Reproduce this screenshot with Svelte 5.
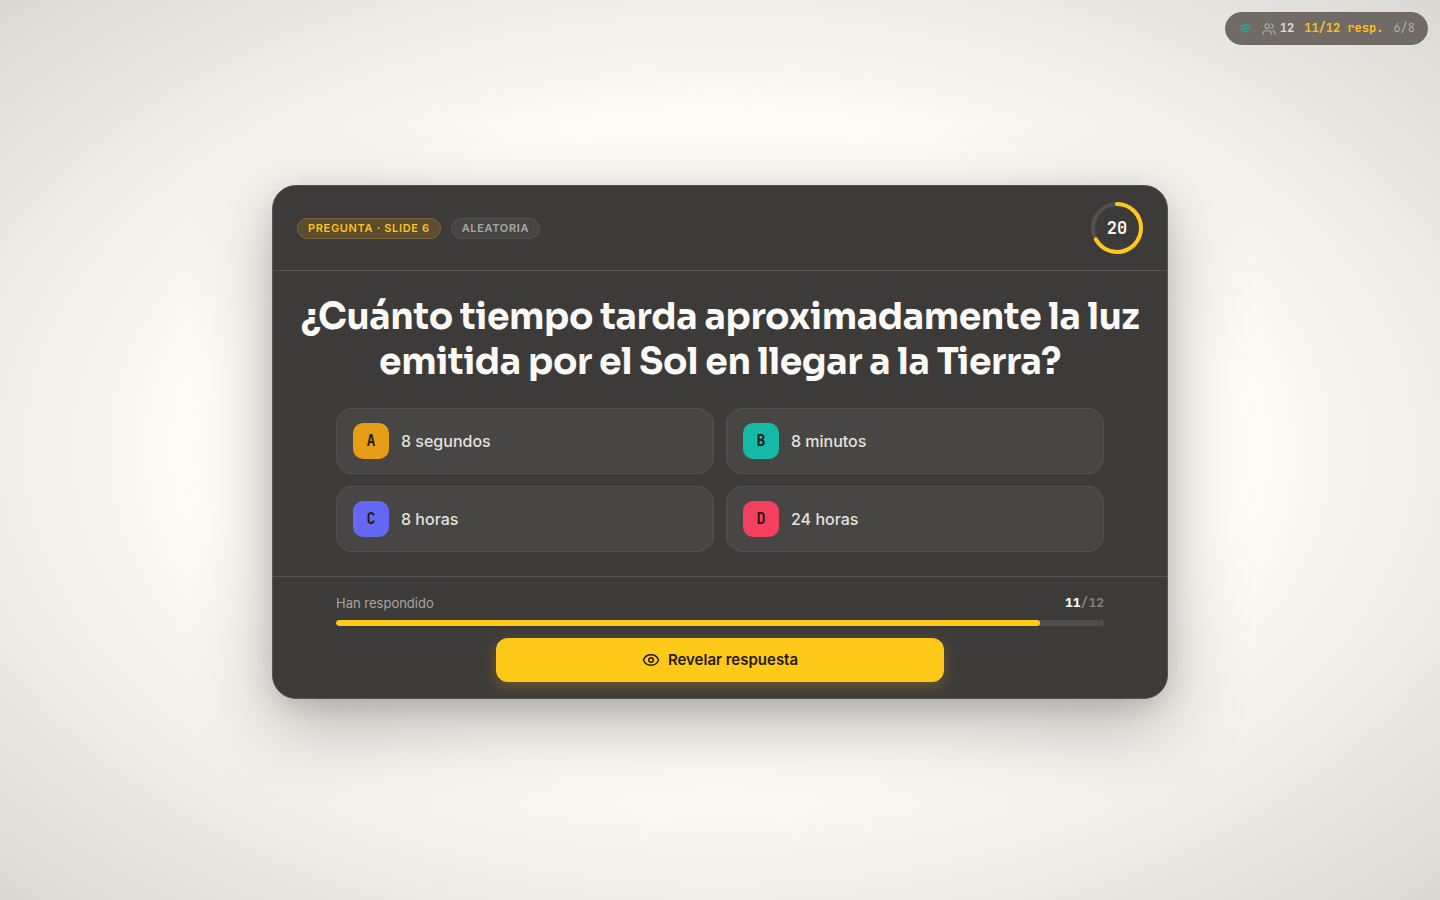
<script>
    const question='¿Cuánto tiempo tarda aproximadamente la luz emitida por el Sol en llegar a la Tierra?'
    const options=[
        {key:'A',text:'8 segundos',color:'#e69e16'},
        {key:'B',text:'8 minutos',color:'#16b8a6'},
        {key:'C',text:'8 horas',color:'#6467f2'},
        {key:'D',text:'24 horas',color:'#f43f5e'}
    ]
    const slide=6
    const slides=8
    const players=12
    const seconds=20
    const limit=30
    const r=24
    const circ=2*Math.PI*r

    let answered=11
    let revealed=false

    $: percent=answered/players*100
    $: offset=circ*(1-seconds/limit)
</script>

<div class="stage">
    <div class="status">
        <svg class="wifi" width="14" height="14" viewBox="0 0 24 24" aria-label="Conectado">
            <path d="M12 20h.01"/>
            <path d="M2 8.82a15 15 0 0 1 20 0"/>
            <path d="M5 12.859a10 10 0 0 1 14 0"/>
            <path d="M8.5 16.429a5 5 0 0 1 7 0"/>
        </svg>
        <span class="players">
            <svg width="14" height="14" viewBox="0 0 24 24" aria-hidden="true">
                <path d="M16 21v-2a4 4 0 0 0-4-4H6a4 4 0 0 0-4 4v2"/>
                <circle cx="9" cy="7" r="4"/>
                <path d="M22 21v-2a4 4 0 0 0-3-3.87"/>
                <path d="M16 3.13a4 4 0 0 1 0 7.75"/>
            </svg>
            <b>{players}</b>
        </span>
        <b class="resp">{answered}/{players} resp.</b>
        <span class="pos">{slide}/{slides}</span>
    </div>

    <main class="card">
        <header>
            <div class="tags">
                <span class="tag main">Pregunta · Slide {slide}</span>
                <span class="tag">Aleatoria</span>
            </div>
            <div class="timer">
                <svg width="52" height="52" viewBox="0 0 52 52" aria-hidden="true">
                    <circle class="track" cx="26" cy="26" {r}/>
                    <circle class="left" cx="26" cy="26" {r} stroke-dasharray={circ} stroke-dashoffset={offset}/>
                </svg>
                <span>{seconds}</span>
            </div>
        </header>

        <section class="body">
            <h1>{question}</h1>
            <ul>
                {#each options as o}
                    <li class:correct={revealed && o.key=='B'}>
                        <span class="key" style="background-color:{o.color}">{o.key}</span>
                        <span>{o.text}</span>
                    </li>
                {/each}
            </ul>
        </section>

        <footer>
            <div class="progress">
                <div class="row">
                    <span id="answered">Han respondido</span>
                    <span class="count"><b>{answered}</b>/{players}</span>
                </div>
                <div class="bar" role="progressbar" aria-labelledby="answered" aria-valuemin="0" aria-valuemax={players} aria-valuenow={answered}>
                    <div class="fill" style="width:{percent}%"></div>
                </div>
            </div>
            <button on:click={()=>{revealed=true}}>
                <svg width="18" height="18" viewBox="0 0 24 24" aria-hidden="true">
                    <path d="M2.062 12.348a1 1 0 0 1 0-.696 10.75 10.75 0 0 1 19.876 0 1 1 0 0 1 0 .696 10.75 10.75 0 0 1-19.876 0"/>
                    <circle cx="12" cy="12" r="3"/>
                </svg>
                Revelar respuesta
            </button>
        </footer>
    </main>
</div>

<style>
    :global(body)
    {
        margin: 0;
        background-color: #fefdf8;
    }
    .stage
    {
        min-height: 100vh;
        box-sizing: border-box;
        padding: 16px 24px 32px;
        display: flex;
        align-items: center;
        justify-content: center;
        font-family: Inter, sans-serif;
        color: #faf9f5;
        background: radial-gradient(ellipse at center, transparent 50%, rgba(28,25,23,0.16) 100%);
    }
    svg
    {
        display: block;
        flex: none;
        fill: none;
        stroke: currentColor;
        stroke-width: 2;
        stroke-linecap: round;
        stroke-linejoin: round;
    }
    .status
    {
        position: fixed;
        top: 12px;
        right: 12px;
        display: flex;
        align-items: center;
        gap: 10px;
        padding: 6px 12px;
        border: 1px solid #6b6660;
        border-radius: 99px;
        background-color: #706b65;
        font: 12px/19px "JetBrains Mono", "DejaVu Sans Mono", monospace;
        color: #b0aca6;
    }
    .wifi
    {
        color: #16b8a6;
    }
    .players
    {
        display: flex;
        align-items: center;
        gap: 4px;
    }
    .players b
    {
        color: #dddad4;
    }
    .resp
    {
        color: #ffc21a;
    }
    .card
    {
        width: 100%;
        max-width: 896px;
        box-sizing: border-box;
        border: 1px solid #575553;
        border-radius: 24px;
        background-color: #3d3b39;
        box-shadow: 0 24px 80px rgba(0,0,0,0.3), 0 8px 24px rgba(0,0,0,0.1);
    }
    header
    {
        display: flex;
        align-items: center;
        justify-content: space-between;
        padding: 16px 24px;
        border-bottom: 1px solid #575553;
    }
    .tags
    {
        display: flex;
        gap: 10px;
    }
    .tag
    {
        padding: 2px 10px;
        border: 1px solid #575553;
        border-radius: 99px;
        background-color: #484644;
        color: #a8a5a0;
        font-size: 11px;
        line-height: 15px;
        font-weight: 600;
        letter-spacing: 0.06em;
        text-transform: uppercase;
    }
    .tag.main
    {
        border-color: #7b683f;
        background-color: #5d4c2d;
        color: #ffc21a;
    }
    .timer
    {
        display: grid;
        place-items: center;
    }
    .timer > *
    {
        grid-area: 1 / 1;
    }
    .timer svg
    {
        transform: rotate(-90deg);
        stroke-width: 4;
    }
    .track
    {
        stroke: #545250;
    }
    .left
    {
        stroke: #ffc91a;
    }
    .timer span
    {
        font: bold 17px/26px "JetBrains Mono", "DejaVu Sans Mono", monospace;
    }
    .body
    {
        padding: 23px 24px 24px;
    }
    h1
    {
        margin: 0 0 24px;
        font-family: Sora, Inter, sans-serif;
        font-size: 36px;
        line-height: 45px;
        font-weight: 700;
        letter-spacing: -0.01em;
        text-align: center;
    }
    ul
    {
        max-width: 768px;
        margin: 0 auto;
        padding: 0;
        display: grid;
        grid-template-columns: 1fr 1fr;
        gap: 12px;
        list-style: none;
    }
    li
    {
        display: flex;
        align-items: center;
        gap: 12px;
        padding: 14px 16px;
        border: 1px solid #545250;
        border-radius: 16px;
        background-color: #484644;
        color: #e3e1dc;
        font-size: 16px;
        line-height: 24px;
        font-weight: 500;
    }
    li.correct
    {
        border-color: #16b8a6;
    }
    .key
    {
        width: 36px;
        height: 36px;
        border-radius: 10px;
        color: #241a10;
        font: bold 15px/36px "JetBrains Mono", "DejaVu Sans Mono", monospace;
        text-align: center;
    }
    footer
    {
        display: flex;
        flex-direction: column;
        align-items: center;
        gap: 12px;
        padding: 16px 24px;
        border-top: 1px solid #575553;
    }
    .progress
    {
        width: 100%;
        max-width: 768px;
    }
    .row
    {
        display: flex;
        justify-content: space-between;
        margin-bottom: 7px;
        font-size: 13px;
        line-height: 20px;
        color: #a8a5a0;
    }
    .count
    {
        font-family: "JetBrains Mono", "DejaVu Sans Mono", monospace;
        font-weight: bold;
        color: #85827d;
    }
    .count b
    {
        color: #faf9f5;
    }
    .bar
    {
        height: 6px;
        border-radius: 3px;
        overflow: hidden;
        background-color: #504e4c;
    }
    .fill
    {
        height: 100%;
        border-radius: 3px;
        background-color: #ffc91a;
    }
    button
    {
        width: 100%;
        max-width: 448px;
        height: 44px;
        display: flex;
        align-items: center;
        justify-content: center;
        gap: 8px;
        border: 0;
        border-radius: 12px;
        background-color: #ffc91a;
        box-shadow: 0 4px 14px rgba(255,201,26,0.25);
        color: #241a10;
        font: 600 15px/22px Inter, sans-serif;
        cursor: pointer;
    }
</style>
